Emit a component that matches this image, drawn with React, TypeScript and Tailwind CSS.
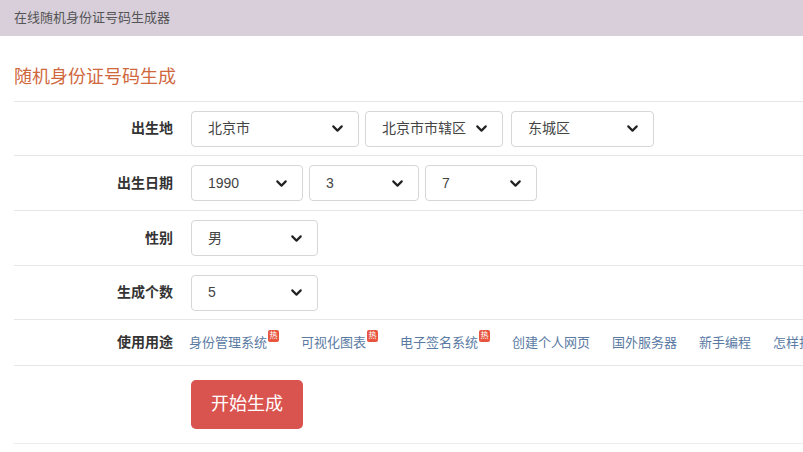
import { ChevronDown } from "lucide-react";

const font = { fontFamily: '"Liberation Sans", "Noto Sans CJK SC", sans-serif' };

const Select = ({ text, w }: { text: string; w: string }) => (
  <div className={`flex h-[36px] shrink-0 items-center justify-between rounded border border-[#d6d6d6] bg-white pl-4 pr-3 text-[14px] text-[#444] ${w}`}>
    <span>{text}</span>
    <ChevronDown size={17} strokeWidth={3} className="text-[#222]" />
  </div>
);

const Row = ({ label, h, children }: { label: string; h: string; children: React.ReactNode }) => (
  <div className={`flex items-center border-b border-[#e6e6e6] ${h}`}>
    <div className="w-[159px] shrink-0 text-right text-[14px] font-bold text-[#333]">{label}</div>
    <div className="ml-[18px] flex items-center gap-[6px]">{children}</div>
  </div>
);

const Hot = () => (
  <span className="relative -top-[7px] ml-[1px] inline-flex h-[12px] w-[11px] items-center justify-center rounded-[2px] bg-[#e8553f] text-[8px] leading-none text-white">热</span>
);

const links: [string, boolean][] = [
  ["身份管理系统", true],
  ["可视化图表", true],
  ["电子签名系统", true],
  ["创建个人网页", false],
  ["国外服务器", false],
  ["新手编程", false],
  ["怎样找客户", false],
];

export default function App() {
  return (
    <div className="h-[452px] w-[803px] overflow-hidden bg-white" style={font}>
      <div className="flex h-[36px] items-center bg-[#d8cfdb] pl-[14px] text-[13px] text-[#555]">在线随机身份证号码生成器</div>
      <div className="mx-[14px] mt-[28px] pb-[10px] text-[18px] text-[#d0683e]">随机身份证号码生成</div>
      <div className="ml-[14px] border-t border-[#e6e6e6]">
        <Row label="出生地" h="h-[54px]">
          <Select text="北京市" w="w-[168px]" />
          <Select text="北京市市辖区" w="w-[138px]" />
          <Select text="东城区" w="w-[143px] ml-[2px]" />
        </Row>
        <Row label="出生日期" h="h-[55px]">
          <Select text="1990" w="w-[112px]" />
          <Select text="3" w="w-[110px]" />
          <Select text="7" w="w-[112px]" />
        </Row>
        <Row label="性别" h="h-[55px]">
          <Select text="男" w="w-[127px]" />
        </Row>
        <Row label="生成个数" h="h-[54px]">
          <Select text="5" w="w-[127px]" />
        </Row>
        <Row label="使用用途" h="h-[46px]">
          <div className="-ml-[2px] flex items-center gap-[22px] whitespace-nowrap text-[13px] text-[#5a7aa3]">
            {links.map(([t, hot]) => (
              <span key={t} className="inline-flex items-center">
                {t}
                {hot && <Hot />}
              </span>
            ))}
          </div>
        </Row>
        <div className="flex h-[78px] items-center border-b border-[#ececec] pl-[177px]">
          <button className="h-[49px] w-[112px] rounded-[5px] bg-[#d9534f] text-[18px] text-white">开始生成</button>
        </div>
      </div>
    </div>
  );
}
